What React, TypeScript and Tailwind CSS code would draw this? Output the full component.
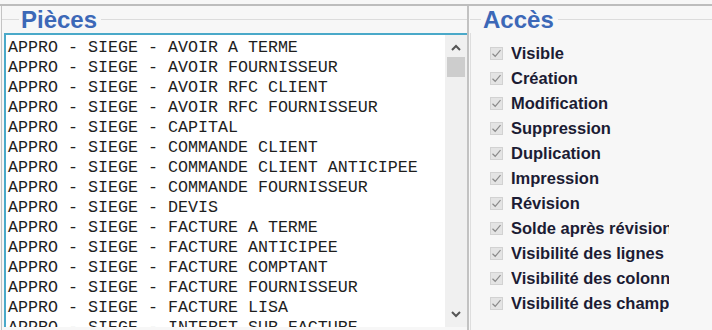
import React from 'react'

const pieces = [
  'APPRO - SIEGE - AVOIR A TERME',
  'APPRO - SIEGE - AVOIR FOURNISSEUR',
  'APPRO - SIEGE - AVOIR RFC CLIENT',
  'APPRO - SIEGE - AVOIR RFC FOURNISSEUR',
  'APPRO - SIEGE - CAPITAL',
  'APPRO - SIEGE - COMMANDE CLIENT',
  'APPRO - SIEGE - COMMANDE CLIENT ANTICIPEE',
  'APPRO - SIEGE - COMMANDE FOURNISSEUR',
  'APPRO - SIEGE - DEVIS',
  'APPRO - SIEGE - FACTURE A TERME',
  'APPRO - SIEGE - FACTURE ANTICIPEE',
  'APPRO - SIEGE - FACTURE COMPTANT',
  'APPRO - SIEGE - FACTURE FOURNISSEUR',
  'APPRO - SIEGE - FACTURE LISA',
  'APPRO - SIEGE - INTERET SUR FACTURE',
]

const acces = [
  'Visible',
  'Création',
  'Modification',
  'Suppression',
  'Duplication',
  'Impression',
  'Révision',
  'Solde après révision',
  'Visibilité des lignes',
  'Visibilité des colonnes',
  'Visibilité des champs',
]

const Legend = ({ title, lead }: { title: string; lead: string }) => (
  <div className="flex items-center h-[27px] shrink-0">
    <div className={`${lead} h-px bg-[#dcdcdc]`} />
    <span className="px-[2px] text-[24px] leading-none font-bold text-[#3c68b7] font-['Liberation_Sans',Arial,sans-serif]">
      {title}
    </span>
    <div className="flex-1 h-px bg-[#dcdcdc] ml-[2px]" />
  </div>
)

const Check = () => (
  <div className="w-[13px] h-[13px] shrink-0 bg-[#e4e4e4] border border-[#d2d2d2] flex items-center justify-center">
    <svg width="11" height="11" viewBox="0 0 11 11">
      <path d="M1.5 5.8 L4.2 8.3 L9.5 2.2" fill="none" stroke="#8a8a8a" strokeWidth="1.2" />
    </svg>
  </div>
)

export default function App() {
  return (
    <div className="w-[712px] h-[330px] bg-[#f7f7f7] overflow-hidden pt-[4px]">
      <div className="h-[326px] border-t-2 border-[#bdbdbd] flex">
        {/* Pièces */}
        <div className="w-[466px] h-full flex flex-col border-l border-[#c4c4c4] ml-[1px]">
          <Legend title="Pièces" lead="w-[17px]" />
          <div className="ml-[2px] h-[294px] flex border-t-2 border-l-2 border-[#4aa9c9] bg-white">
            <div className="flex-1 overflow-hidden pt-[3px] pl-[2px]">
              {pieces.map(p => (
                <div
                  key={p}
                  className="h-[20px] leading-[20px] whitespace-pre text-[16.67px] text-[#1e1e1e] font-['Liberation_Mono','Courier_New',monospace]"
                >
                  {p}
                </div>
              ))}
            </div>
            <div className="w-[22px] bg-[#f0f0f0] flex flex-col items-center">
              <svg width="12" height="8" viewBox="0 0 12 8" className="mt-[9px]">
                <path d="M2 6 L6 2 L10 6" fill="none" stroke="#555" strokeWidth="2" />
              </svg>
              <div className="mt-[5px] w-[18px] h-[20px] bg-[#cdcdcd]" />
              <div className="flex-1" />
              <svg width="12" height="8" viewBox="0 0 12 8" className="mb-[9px]">
                <path d="M2 2 L6 6 L10 2" fill="none" stroke="#555" strokeWidth="2" />
              </svg>
            </div>
          </div>
        </div>

        {/* splitter */}
        <div className="w-[2px] h-full bg-[#c2c2c2]" />

        {/* Accès */}
        <div className="flex-1 h-full flex flex-col ml-[1px]">
          <Legend title="Accès" lead="w-[11px]" />
          <div className="flex-1 border-l border-[#dedede] pt-[8px] pl-[19px]">
            {acces.map(a => (
              <div key={a} className="h-[25px] flex items-center">
                <Check />
                <span className="ml-[8px] w-[158px] overflow-hidden whitespace-nowrap text-[16.5px] font-bold text-[#1c1c34] font-['Liberation_Sans',Arial,sans-serif]">
                  {a}
                </span>
              </div>
            ))}
          </div>
        </div>
      </div>
    </div>
  )
}
